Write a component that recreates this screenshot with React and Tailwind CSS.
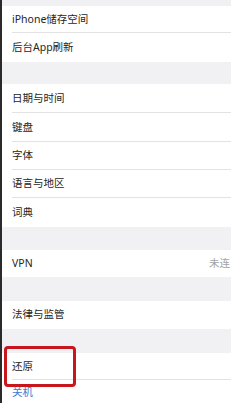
const font = { fontFamily: '"Noto Sans", "Noto Sans CJK SC", sans-serif' };

const Row = ({ h, label, right, last, blue }) => (
  <div className={`relative bg-white flex items-center pl-[12px] ${h}`}>
    <span className={`text-[10.5px] ${blue ? "text-[#3a7bd5]" : "text-[#262626]"}`}>{label}</span>
    {right && (
      <span className="absolute right-[1px] text-[10.5px] text-[#a3a3a3]">{right}</span>
    )}
    {!last && <div className="absolute left-[12px] right-0 bottom-0 h-px bg-[#e3e3e6]" />}
  </div>
);

const Gap = ({ h }) => <div className={`bg-[#f1f1f4] ${h}`} />;

export default function App() {
  return (
    <div className="relative w-[231px] h-[403px] overflow-hidden bg-[#f1f1f4]" style={font}>
      <div className="flex flex-col">
        <Gap h="h-[6px]" />
        <Row h="h-[27px]" label="iPhone储存空间" />
        <Row h="h-[29px]" label="后台App刷新" last />
        <Gap h="h-[22px]" />
        <Row h="h-[29px]" label="日期与时间" />
        <Row h="h-[29px]" label="键盘" />
        <Row h="h-[28px]" label="字体" />
        <Row h="h-[28px]" label="语言与地区" />
        <Row h="h-[29px]" label="词典" last />
        <Gap h="h-[23px]" />
        <Row h="h-[27px]" label="VPN" right="未连" last />
        <Gap h="h-[24px]" />
        <Row h="h-[28px]" label="法律与监管" last />
        <Gap h="h-[24px]" />
        <Row h="h-[27px]" label="还原" />
        <Row h="h-[26px]" label="关机" blue last />
      </div>
      <div className="absolute left-0 top-0 bottom-0 w-[2px] bg-[#2a2a2a]" />
      <div className="absolute left-[4px] top-[346px] w-[72px] h-[41px] border-[3px] border-[#c8161d] rounded-[4px]" />
    </div>
  );
}
